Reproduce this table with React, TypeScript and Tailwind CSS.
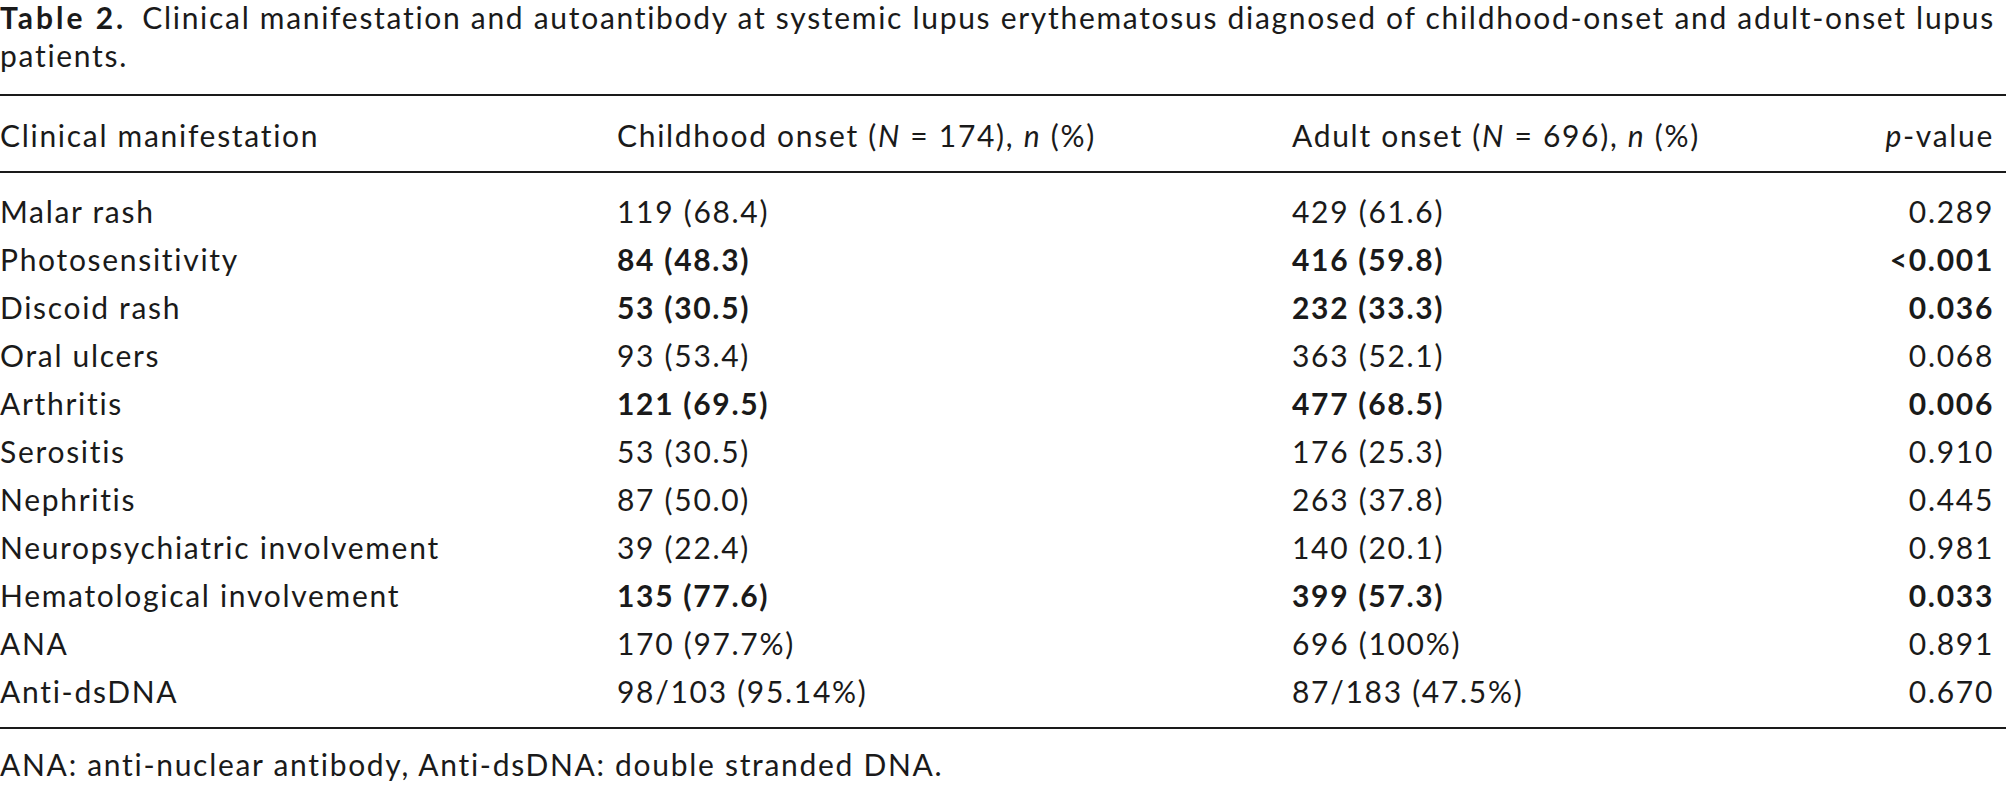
import React from 'react';

type Row = {
  label: string;
  child: string;
  adult: string;
  p: string;
  bold?: boolean;
};

const rows: Row[] = [
  { label: 'Malar rash', child: '119 (68.4)', adult: '429 (61.6)', p: '0.289' },
  { label: 'Photosensitivity', child: '84 (48.3)', adult: '416 (59.8)', p: '<0.001', bold: true },
  { label: 'Discoid rash', child: '53 (30.5)', adult: '232 (33.3)', p: '0.036', bold: true },
  { label: 'Oral ulcers', child: '93 (53.4)', adult: '363 (52.1)', p: '0.068' },
  { label: 'Arthritis', child: '121 (69.5)', adult: '477 (68.5)', p: '0.006', bold: true },
  { label: 'Serositis', child: '53 (30.5)', adult: '176 (25.3)', p: '0.910' },
  { label: 'Nephritis', child: '87 (50.0)', adult: '263 (37.8)', p: '0.445' },
  { label: 'Neuropsychiatric involvement', child: '39 (22.4)', adult: '140 (20.1)', p: '0.981' },
  { label: 'Hematological involvement', child: '135 (77.6)', adult: '399 (57.3)', p: '0.033', bold: true },
  { label: 'ANA', child: '170 (97.7%)', adult: '696 (100%)', p: '0.891' },
  { label: 'Anti-dsDNA', child: '98/103 (95.14%)', adult: '87/183 (47.5%)', p: '0.670' },
];

const gridCls = 'grid grid-cols-[617px_675px_1fr_auto] pr-[12px]';

export default function App() {
  return (
    <div className="w-[2006px] h-[785px] overflow-hidden bg-white text-[#1a1a1a] font-['Lato',sans-serif] text-[30px] tracking-[1.7px]">
      <div className="whitespace-nowrap">
        <div className="leading-[34px]">
          <span className="font-bold tracking-[3px]">Table 2.</span>
          <span className="ml-[16px]">
            Clinical manifestation and autoantibody at systemic lupus erythematosus diagnosed of childhood-onset and adult-onset lupus
          </span>
        </div>
        <div className="leading-[42px]">patients.</div>
      </div>

      <div className="mt-[18px] border-t-2 border-[#1a1a1a]" />

      <div className={`${gridCls} leading-[48px] pt-[15px] pb-[12px]`}>
        <div>Clinical manifestation</div>
        <div>
          Childhood onset (<i>N</i> = 174), <i>n</i> (%)
        </div>
        <div>
          Adult onset (<i>N</i> = 696), <i>n</i> (%)
        </div>
        <div className="text-right">
          <i>p</i>-value
        </div>
      </div>

      <div className="border-t-2 border-[#1a1a1a]" />

      <div className="pt-[14px] pb-[12px] leading-[48px]">
        {rows.map((r) => (
          <div key={r.label} className={gridCls}>
            <div>{r.label}</div>
            <div className={r.bold ? 'font-bold' : ''}>{r.child}</div>
            <div className={r.bold ? 'font-bold' : ''}>{r.adult}</div>
            <div className={`text-right ${r.bold ? 'font-bold' : ''}`}>{r.p}</div>
          </div>
        ))}
      </div>

      <div className="border-t-2 border-[#1a1a1a]" />

      <div className="mt-[11px] leading-[48px]">
        ANA: anti-nuclear antibody, Anti-dsDNA: double stranded DNA.
      </div>
    </div>
  );
}
